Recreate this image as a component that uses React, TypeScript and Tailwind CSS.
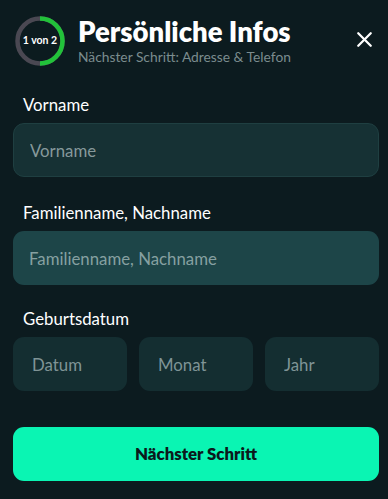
import React from 'react';
import { X } from 'lucide-react';

const font = { fontFamily: 'Lato, "Noto Sans", sans-serif' };

const ProgressRing: React.FC = () => (
  <div className="relative w-[52px] h-[52px] shrink-0">
    <svg width="52" height="52" viewBox="0 0 52 52" className="absolute inset-0">
      <circle cx="26" cy="26" r="22.5" fill="none" stroke="#4a4852" strokeWidth="4.5" />
      <path d="M26 3.5 A22.5 22.5 0 0 1 26 48.5" fill="none" stroke="#22c23a" strokeWidth="4.5" />
    </svg>
    <span className="absolute inset-0 flex items-center justify-center text-[10.5px] font-bold text-white">
      1 von 2
    </span>
  </div>
);

const App: React.FC = () => {
  return (
    <div style={font} className="w-[388px] h-[499px] bg-[#0c1b1f] pl-[13px] pr-[9px] overflow-hidden">
      <div className="flex items-center pt-[15px] pl-[1px]">
        <ProgressRing />
        <div className="ml-[12px] flex-1">
          <h1 className="text-[27.5px] leading-[30px] font-extrabold text-white">Persönliche Infos</h1>
          <p className="text-[13.8px] leading-[18px] text-[#7b8c8e] mt-[1px]">Nächster Schritt: Adresse &amp; Telefon</p>
        </div>
        <button className="text-white mr-[2px] -mt-[4px]">
          <X className="w-[25px] h-[25px]" strokeWidth={2.2} />
        </button>
      </div>

      <form className="mt-[28px]">
        <label className="block pl-[10px] text-[16.8px] leading-[20px] font-normal text-white">Vorname</label>
        <input
          type="text"
          placeholder="Vorname"
          className="mt-[8px] w-full h-[54px] rounded-[11px] bg-[#163134] border border-[#1f3f41] px-[16px] text-[16.8px] text-white placeholder:text-[#86999b] outline-none"
        />

        <label className="block mt-[26px] pl-[10px] text-[16.8px] leading-[20px] font-normal text-white">
          Familienname, Nachname
        </label>
        <input
          type="text"
          placeholder="Familienname, Nachname"
          className="mt-[8px] w-full h-[54px] rounded-[11px] bg-[#1d4548] px-[16px] text-[16.8px] text-white placeholder:text-[#86a0a1] outline-none"
        />

        <label className="block mt-[24px] pl-[10px] text-[16.8px] leading-[20px] font-normal text-white">
          Geburtsdatum
        </label>
        <div className="mt-[8px] grid grid-cols-3 gap-[12px]">
          {['Datum', 'Monat', 'Jahr'].map((p) => (
            <input
              key={p}
              type="text"
              placeholder={p}
              className="w-full h-[54px] rounded-[11px] bg-[#142e31] px-[19px] text-[16.8px] text-white placeholder:text-[#7f9496] outline-none"
            />
          ))}
        </div>

        <button
          type="button"
          className="mt-[36px] w-full h-[54px] rounded-[11px] bg-[#0af5b3] text-[16.8px] font-extrabold text-[#0b1a1c]"
        >
          Nächster Schritt
        </button>
      </form>
    </div>
  );
};

export default App;
